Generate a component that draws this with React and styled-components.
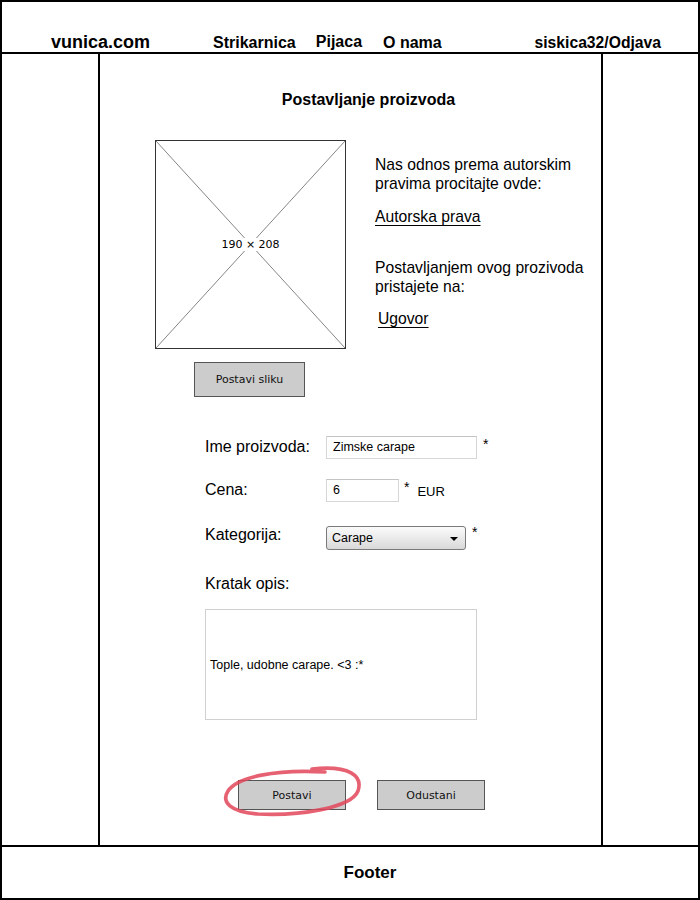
import React from 'react'
import styled, { createGlobalStyle } from 'styled-components'

const GlobalStyle = createGlobalStyle`
    html, body {
        margin: 0;
        padding: 0;
        background: #fff;
    }
    body {
        font-family: "Liberation Sans", Arial, sans-serif;
        color: #000;
    }
    * {
        box-sizing: border-box;
    }
`

export default function App () {
    return (
        <>
        <GlobalStyle/>
        <Page>
            <Header>
                <Brand>vunica.com</Brand>
                <NavItem $gap={63}>Strikarnica</NavItem>
                <NavItem $gap={20} $raise={1}>Pijaca</NavItem>
                <NavItem $gap={21}>O nama</NavItem>
                <UserLink>siskica32/Odjava</UserLink>
            </Header>
            <Main>
                <Sidebar/>
                <Center>
                    <Title>Postavljanje proizvoda</Title>
                    <TopSection>
                        <ImageColumn>
                            <Placeholder>
                                <svg width="100%" height="100%" viewBox="0 0 100 100" preserveAspectRatio="none">
                                    <line x1="0" y1="0" x2="100" y2="100" stroke="#333" strokeWidth="0.6" vectorEffect="non-scaling-stroke"/>
                                    <line x1="100" y1="0" x2="0" y2="100" stroke="#333" strokeWidth="0.6" vectorEffect="non-scaling-stroke"/>
                                </svg>
                                <PlaceholderLabel>190 × 208</PlaceholderLabel>
                            </Placeholder>
                            <SketchButton $width={111} $height={35}>Postavi sliku</SketchButton>
                        </ImageColumn>
                        <InfoColumn>
                            <Paragraph>Nas odnos prema autorskim<br/>pravima procitajte ovde:</Paragraph>
                            <TextLink $top={14}>Autorska prava</TextLink>
                            <Paragraph $top={32}>Postavljanjem ovog prozivoda<br/>pristajete na:</Paragraph>
                            <TextLink $top={13} $indent={3}>Ugovor</TextLink>
                        </InfoColumn>
                    </TopSection>

                    <Form>
                        <FormRow $top={39}>
                            <Label>Ime proizvoda:</Label>
                            <TextInput $width={151}>Zimske carape</TextInput>
                            <Required>*</Required>
                        </FormRow>
                        <FormRow $top={20}>
                            <Label>Cena:</Label>
                            <TextInput $width={73}>6</TextInput>
                            <Required $gap={5}>*</Required>
                            <Unit>EUR</Unit>
                        </FormRow>
                        <FormRow $top={22}>
                            <Label>Kategorija:</Label>
                            <Select>
                                Carape
                                <Arrow/>
                            </Select>
                            <Required>*</Required>
                        </FormRow>
                        <Label $top={23}>Kratak opis:</Label>
                        <TextArea>Tople, udobne carape. &lt;3 :*</TextArea>
                    </Form>

                    <ButtonRow>
                        <SketchButton $width={108} $height={30}>Postavi</SketchButton>
                        <SketchButton $width={108} $height={30}>Odustani</SketchButton>
                        <Scribble width="300" height="70" viewBox="0 0 300 70">
                            <path
                                d="M 212 9 C 250 5, 263 16, 258 31 C 251 48, 200 56, 158 54 C 130 52, 121 42, 128 31 C 137 17, 176 9, 225 12"
                                fill="none"
                                stroke="#e2475a"
                                strokeWidth="3.6"
                                strokeLinecap="round"
                                opacity="0.85"
                            />
                        </Scribble>
                    </ButtonRow>
                </Center>
                <Sidebar/>
            </Main>
            <Footer>Footer</Footer>
        </Page>
        </>
    )
}

const Page = styled.div`
    width: 700px;
    height: 900px;
    border: 2px solid #000;
    display: grid;
    grid-template-rows: 52px 1fr 53px;
`

const Header = styled.header`
    display: flex;
    align-items: flex-end;
    padding: 0 37px 0 49px;
    border-bottom: 2px solid #000;
    font-weight: 700;
    font-size: 16px;
`

const Brand = styled.div`
    font-size: 18px;
    line-height: 20px;
`

const NavItem = styled.div`
    margin-left: ${p => p.$gap}px;
    line-height: 18px;
    margin-bottom: ${p => p.$raise || 0}px;
`

const UserLink = styled.div`
    margin-left: auto;
    font-size: 15.7px;
    line-height: 18px;
`

const Main = styled.main`
    display: grid;
    grid-template-columns: 96px 505px 1fr;
    min-height: 0;
`

const Sidebar = styled.aside``

const Center = styled.section`
    border-left: 2px solid #000;
    border-right: 2px solid #000;
    display: flex;
    flex-direction: column;
`

const Title = styled.h1`
    margin: 36px 0 0 0;
    padding-left: 36px;
    text-align: center;
    font-size: 16px;
    line-height: 20px;
    font-weight: 700;
`

const TopSection = styled.div`
    display: flex;
    margin-top: 30px;
    padding-left: 55px;
`

const ImageColumn = styled.div`
    display: flex;
    flex-direction: column;
    align-items: flex-start;
    gap: 13px;

    & > button {
        margin-left: 39px;
    }
`

const Placeholder = styled.div`
    position: relative;
    width: 191px;
    height: 209px;
    border: 1px solid #333;
    display: flex;
    align-items: center;
    justify-content: center;

    svg {
        position: absolute;
        inset: 0;
    }
`

const PlaceholderLabel = styled.span`
    position: relative;
    font-family: "DejaVu Sans", sans-serif;
    font-size: 11px;
    background: #fff;
    padding: 0 1px;
`

const SketchButton = styled.button`
    width: ${p => p.$width}px;
    height: ${p => p.$height}px;
    background: #cccccc;
    border: 1.5px solid #555;
    border-radius: 0;
    font-family: "DejaVu Sans", sans-serif;
    font-size: 11px;
    color: #111;
    padding: 0;
`

const InfoColumn = styled.div`
    margin-left: 29px;
    padding-top: 15px;
    display: flex;
    flex-direction: column;
    align-items: flex-start;
    font-size: 15.7px;
    line-height: 19px;
`

const Paragraph = styled.p`
    margin: ${p => p.$top || 0}px 0 0 0;
`

const TextLink = styled.a`
    margin-top: ${p => p.$top}px;
    margin-left: ${p => p.$indent || 0}px;
    color: #000;
    text-decoration: underline;
    text-underline-offset: 3px;
    text-decoration-thickness: 1px;
`

const Form = styled.div`
    display: flex;
    flex-direction: column;
    padding-left: 105px;
`

const FormRow = styled.div`
    display: flex;
    align-items: flex-start;
    margin-top: ${p => p.$top}px;
`

const Label = styled.div`
    width: 121px;
    font-size: 16px;
    line-height: 22px;
    margin-top: ${p => p.$top || 0}px;
`

const TextInput = styled.div`
    width: ${p => p.$width}px;
    height: 23px;
    border: 1px solid #d6d6d6;
    border-top-color: #c4c4c4;
    padding-left: 6px;
    font-size: 12.5px;
    line-height: 21px;
`

const Required = styled.span`
    margin-left: ${p => p.$gap || 6}px;
    font-size: 14px;
    line-height: 16px;
`

const Unit = styled.span`
    margin-left: 8px;
    margin-top: 5px;
    font-size: 13px;
    line-height: 16px;
`

const Select = styled.div`
    position: relative;
    width: 140px;
    height: 24px;
    margin-top: 2px;
    border: 1px solid #7a7a7a;
    border-radius: 3px;
    background: linear-gradient(#fbfbfb, #d9d9d9);
    padding-left: 5px;
    font-size: 12.5px;
    line-height: 22px;
`

const Arrow = styled.span`
    position: absolute;
    right: 7px;
    top: 10px;
    border-left: 4px solid transparent;
    border-right: 4px solid transparent;
    border-top: 4px solid #000;
`

const TextArea = styled.div`
    margin-top: 14px;
    width: 272px;
    height: 111px;
    border: 1px solid #d0d0d0;
    display: flex;
    align-items: center;
    padding-left: 4px;
    font-size: 12.5px;
`

const ButtonRow = styled.div`
    position: relative;
    display: flex;
    gap: 31px;
    margin-top: 60px;
    padding-left: 138px;
`

const Scribble = styled.svg`
    position: absolute;
    left: 0;
    top: -20px;
    pointer-events: none;
`

const Footer = styled.footer`
    border-top: 2px solid #000;
    display: flex;
    align-items: center;
    justify-content: center;
    padding-left: 40px;
    font-weight: 700;
    font-size: 17px;
`
